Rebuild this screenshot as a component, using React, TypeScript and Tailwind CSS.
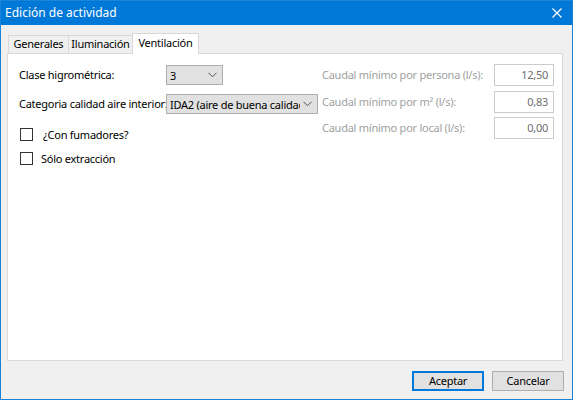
import React from "react";

const font = { fontFamily: '"Noto Sans", sans-serif' };

function Chevron() {
  return (
    <svg width="9" height="6" viewBox="0 0 9 6" className="shrink-0">
      <path d="M0.5 0.8 L4.5 4.8 L8.5 0.8" fill="none" stroke="#505050" strokeWidth="1" />
    </svg>
  );
}

function Select({ value, width }: { value: string; width: string }) {
  return (
    <div
      className={`${width} h-[20px] bg-[#e1e1e1] border border-[#adadad] flex items-center pl-[3px] pr-[5px] gap-[3px] shrink-0`}
    >
      <span className="flex-1 overflow-hidden whitespace-nowrap text-black leading-none">{value}</span>
      <Chevron />
    </div>
  );
}

function Checkbox({ label, gap }: { label: string; gap: string }) {
  return (
    <div className="flex items-center h-[13px]">
      <div className="w-[13px] h-[13px] border border-[#333333] bg-white shrink-0" />
      <span className={`${gap} text-black leading-none`}>{label}</span>
    </div>
  );
}

function Field({ label, value }: { label: string; value: string }) {
  return (
    <div className="flex items-center justify-between h-[22px]">
      <span className="text-[#a0a0a0] whitespace-nowrap">{label}</span>
      <div className="w-[60px] h-[22px] border border-[#cccccc] bg-white flex items-center justify-end pr-[5px] text-[#6d6d6d]">
        {value}
      </div>
    </div>
  );
}

export default function App() {
  return (
    <div
      className="w-[573px] h-[400px] border border-[#1883d7] flex flex-col text-[11px] tracking-[-0.25px] overflow-hidden"
      style={font}
    >
      <div className="h-[24px] bg-[#0078d7] flex items-center justify-between pl-[4px] pr-[10px] shrink-0">
        <span className="text-white text-[12px] tracking-normal">Edición de actividad</span>
        <svg width="10" height="10" viewBox="0 0 10 10">
          <path d="M0.5 0.5 L9.5 9.5 M9.5 0.5 L0.5 9.5" stroke="white" strokeWidth="1.2" />
        </svg>
      </div>
      <div className="flex-1 bg-[#f0f0f0] flex flex-col pt-[8px] pl-[6px] pr-[9px]">
        <div className="flex items-end h-[20px] pl-[1px] relative z-10">
          <div className="h-[18px] w-[61px] bg-[#f0f0f0] border border-b-0 border-[#d9d9d9] flex items-center justify-center text-black">
            Generales
          </div>
          <div className="h-[18px] w-[64px] bg-[#f0f0f0] border border-l-0 border-b-0 border-[#d9d9d9] flex items-center justify-center text-black">
            Iluminación
          </div>
          <div className="h-[21px] w-[67px] -mb-px bg-white border border-b-0 border-[#d9d9d9] flex items-center justify-center text-black -ml-px pb-[2px]">
            Ventilación
          </div>
        </div>
        <div className="h-[308px] bg-white border border-[#d9d9d9] flex">
          <div className="flex flex-col pl-[11px] pt-[11px]">
            <div className="flex items-center h-[20px]">
              <span className="w-[147px] text-black whitespace-nowrap">Clase higrométrica:</span>
              <Select value="3" width="w-[57px]" />
            </div>
            <div className="flex items-center h-[20px] mt-[9px]">
              <span className="w-[147px] text-black whitespace-nowrap">Categoria calidad aire interior:</span>
              <Select value="IDA2 (aire de buena calidad)" width="w-[152px]" />
            </div>
            <div className="flex flex-col gap-[11px] mt-[14px] pl-[1px]">
              <Checkbox label="¿Con fumadores?" gap="ml-[10px]" />
              <Checkbox label="Sólo extracción" gap="ml-[8px]" />
            </div>
          </div>
          <div className="flex-1" />
          <div className="flex flex-col w-[232px] pt-[10px] pr-[8px] box-content">
            <Field label="Caudal mínimo por persona (l/s):" value="12,50" />
            <div className="mt-[5px]">
              <Field label="Caudal mínimo por m² (l/s):" value="0,83" />
            </div>
            <div className="mt-[4px]">
              <Field label="Caudal mínimo por local (l/s):" value="0,00" />
            </div>
          </div>
        </div>
        <div className="flex justify-end gap-[8px] mt-[10px]">
          <button className="w-[72px] h-[20px] bg-[#e1e1e1] border-2 border-[#0078d7] text-black flex items-center justify-center">
            Aceptar
          </button>
          <button className="w-[72px] h-[20px] bg-[#e1e1e1] border border-[#adadad] text-black flex items-center justify-center -mr-px">
            Cancelar
          </button>
        </div>
      </div>
    </div>
  );
}
